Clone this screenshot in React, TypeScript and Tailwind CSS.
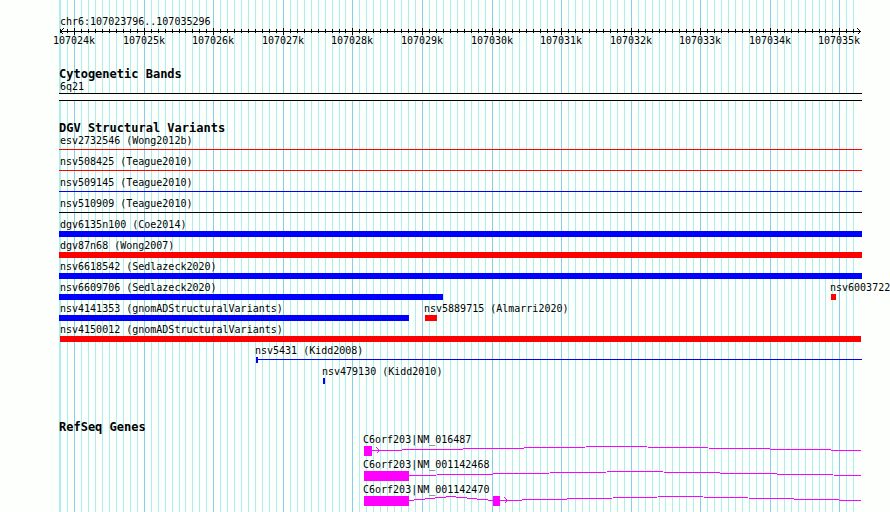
import React from "react";

// the plot is 803 units wide, base REGION_START sits one unit in
const PLOT_WIDTH = 803;
const REGION_START = 107023796;
const REGION_END = 107035296;

const toX = (bp: number) =>
  1 + Math.round(((bp - REGION_START) * 800) / (REGION_END - REGION_START));
const percent = (x: number) => `${(x / PLOT_WIDTH) * 100}%`;

type Tick = { bp: number; x: number; major: boolean };

const ticks: Tick[] = [];
for (let bp = 107023800; bp < REGION_END; bp += 100) {
  ticks.push({ bp, x: toX(bp), major: bp % 1000 === 0 });
}

type Feature = {
  label: string;
  labelX: number;
  start: number;
  end: number;
  bar: string;
  cap?: boolean;
};

const RED = "h-1.5 bg-[#ff0000]";
const BLUE = "h-1.5 bg-[#0000ff]";
const THIN_RED = "mt-0.5 h-px bg-[#ff0000]";
const THIN_BLUE = "mt-0.5 h-px bg-[#0000ff]";
const THIN_BLACK = "mt-0.5 h-px bg-black";

const full = (label: string, bar: string): Feature[] => [
  { label, labelX: 1, start: 0, end: 803, bar },
];

const variantRows: Feature[][] = [
  full("esv2732546 (Wong2012b)", THIN_RED),
  full("nsv508425 (Teague2010)", THIN_RED),
  full("nsv509145 (Teague2010)", THIN_BLUE),
  full("nsv510909 (Teague2010)", THIN_BLACK),
  full("dgv6135n100 (Coe2014)", BLUE),
  full("dgv87n68 (Wong2007)", RED),
  full("nsv6618542 (Sedlazeck2020)", BLUE),
  [
    { label: "nsv6609706 (Sedlazeck2020)", labelX: 1, start: 0, end: 384, bar: BLUE },
    { label: "nsv6003722", labelX: 771, start: 772, end: 777, bar: RED },
  ],
  [
    { label: "nsv4141353 (gnomADStructuralVariants)", labelX: 1, start: 0, end: 350, bar: BLUE },
    { label: "nsv5889715 (Almarri2020)", labelX: 365, start: 366, end: 378, bar: RED },
  ],
  [{ label: "nsv4150012 (gnomADStructuralVariants)", labelX: 1, start: 1, end: 802, bar: RED }],
  [{ label: "nsv5431 (Kidd2008)", labelX: 196, start: 197, end: 803, bar: THIN_BLUE, cap: true }],
  [{ label: "nsv479130 (Kidd2010)", labelX: 263, start: 264, end: 266, bar: BLUE }],
];

type Gene = {
  label: string;
  exons: [number, number][];
  introns: [number, number][];
  arrowX?: number;
};

const genes: Gene[] = [
  { label: "C6orf203|NM_016487", exons: [[305, 313]], introns: [[313, 802]], arrowX: 317 },
  { label: "C6orf203|NM_001142468", exons: [[305, 350]], introns: [[350, 802]] },
  {
    label: "C6orf203|NM_001142470",
    exons: [[305, 350], [434, 441]],
    introns: [[350, 434], [441, 802]],
    arrowX: 445,
  },
];

function GridLines() {
  return (
    <svg
      className="absolute inset-0 -z-10 h-full w-full"
      shapeRendering="crispEdges"
      aria-hidden="true"
    >
      <rect x="0" y="0" width="1" height="100%" fill="#afeeee" />
      {ticks.map(({ bp, x, major }) => (
        <rect
          key={bp}
          x={percent(x)}
          y="0"
          width="1"
          height="100%"
          fill={major ? "#87ceeb" : "#afeeee"}
        />
      ))}
    </svg>
  );
}

function Ruler() {
  return (
    <section>
      <p className="h-[13px] pl-px leading-[15px]">chr6:107023796..107035296</p>
      <svg
        className="block h-[7px] w-full overflow-visible"
        viewBox="0 0 803 7"
        preserveAspectRatio="none"
        shapeRendering="crispEdges"
        role="img"
        aria-label="Scale"
      >
        <rect x="1" y="4" width="801" height="1" />
        {ticks.map(({ bp, x, major }) => (
          <rect
            key={bp}
            x={x}
            y={major ? 1 : 2}
            width="1"
            height={major ? 7 : 4}
          />
        ))}
        <path d="M4.5 1.5L1.5 4.5L4.5 7.5M798.5 1.5L801.5 4.5L798.5 7.5" fill="none" stroke="#000" />
      </svg>
      <div className="grid">
        {ticks
          .filter((tick) => tick.major)
          .map(({ bp, x }) => (
            <span
              key={bp}
              className="col-start-1 row-start-1 flex w-0 justify-center"
              style={{ marginLeft: percent(x) }}
            >
              {bp / 1000}k
            </span>
          ))}
      </div>
    </section>
  );
}

function TrackTitle({ children }: { children: React.ReactNode }) {
  return <h2 className="h-[13px] text-[12px] leading-[15px] font-bold">{children}</h2>;
}

function FeatureRow({ features }: { features: Feature[] }) {
  return (
    <li className="grid h-[21px] grid-cols-[100%]">
      {features.map(({ label, labelX, start, end, bar, cap }) => (
        <div key={label} className="col-start-1 row-start-1">
          <p style={{ marginLeft: percent(labelX) }}>{label}</p>
          <div
            className="flex h-1.5 items-start"
            style={{ marginLeft: percent(start), width: percent(end - start) }}
          >
            {cap && <div className="h-1.5 w-0.5 bg-[#0000ff]" />}
            <div className={`grow ${bar}`} />
          </div>
        </div>
      ))}
    </li>
  );
}

function GeneRow({ gene }: { gene: Gene }) {
  return (
    <li className="h-[25px]">
      <p style={{ marginLeft: percent(304) }}>{gene.label}</p>
      <svg
        className="block h-2.5 w-full"
        viewBox="0 0 803 10"
        preserveAspectRatio="none"
        shapeRendering="crispEdges"
        role="img"
        aria-label={gene.label}
      >
        {gene.introns.map(([start, end]) => (
          <polyline
            key={start}
            points={`${start},4.5 ${(start + end) / 2},0.5 ${end},4.5`}
            fill="none"
            stroke="#ff00ff"
          />
        ))}
        {gene.exons.map(([start, end]) => (
          <rect key={start} x={start} y="0" width={end - start} height="10" fill="#ff00ff" />
        ))}
        {gene.arrowX && (
          <path
            d={`M${gene.arrowX + 0.5} 1.5l3 3l-3 3`}
            fill="none"
            stroke="#ff00ff"
          />
        )}
      </svg>
    </li>
  );
}

export default function App() {
  return (
    <div className="min-h-screen overflow-x-hidden bg-[#fdfffc] pr-7 pl-[59px] font-['DejaVu_Sans_Mono',monospace] text-[10px] leading-[13px] whitespace-nowrap text-black">
      <main className="relative isolate flex min-h-screen flex-col pt-3.5">
        <GridLines />
        <Ruler />
        <section className="mt-5">
          <TrackTitle>Cytogenetic Bands</TrackTitle>
          <p className="pl-px">6q21</p>
          <div className="h-2 border-y border-black bg-[#fdfffc]" />
        </section>
        <section className="mt-5">
          <TrackTitle>DGV Structural Variants</TrackTitle>
          <ul>
            {variantRows.map((features) => (
              <FeatureRow key={features[0].label} features={features} />
            ))}
          </ul>
        </section>
        <section className="mt-[34px]">
          <TrackTitle>RefSeq Genes</TrackTitle>
          <ul>
            {genes.map((gene) => (
              <GeneRow key={gene.label} gene={gene} />
            ))}
          </ul>
        </section>
      </main>
    </div>
  );
}
